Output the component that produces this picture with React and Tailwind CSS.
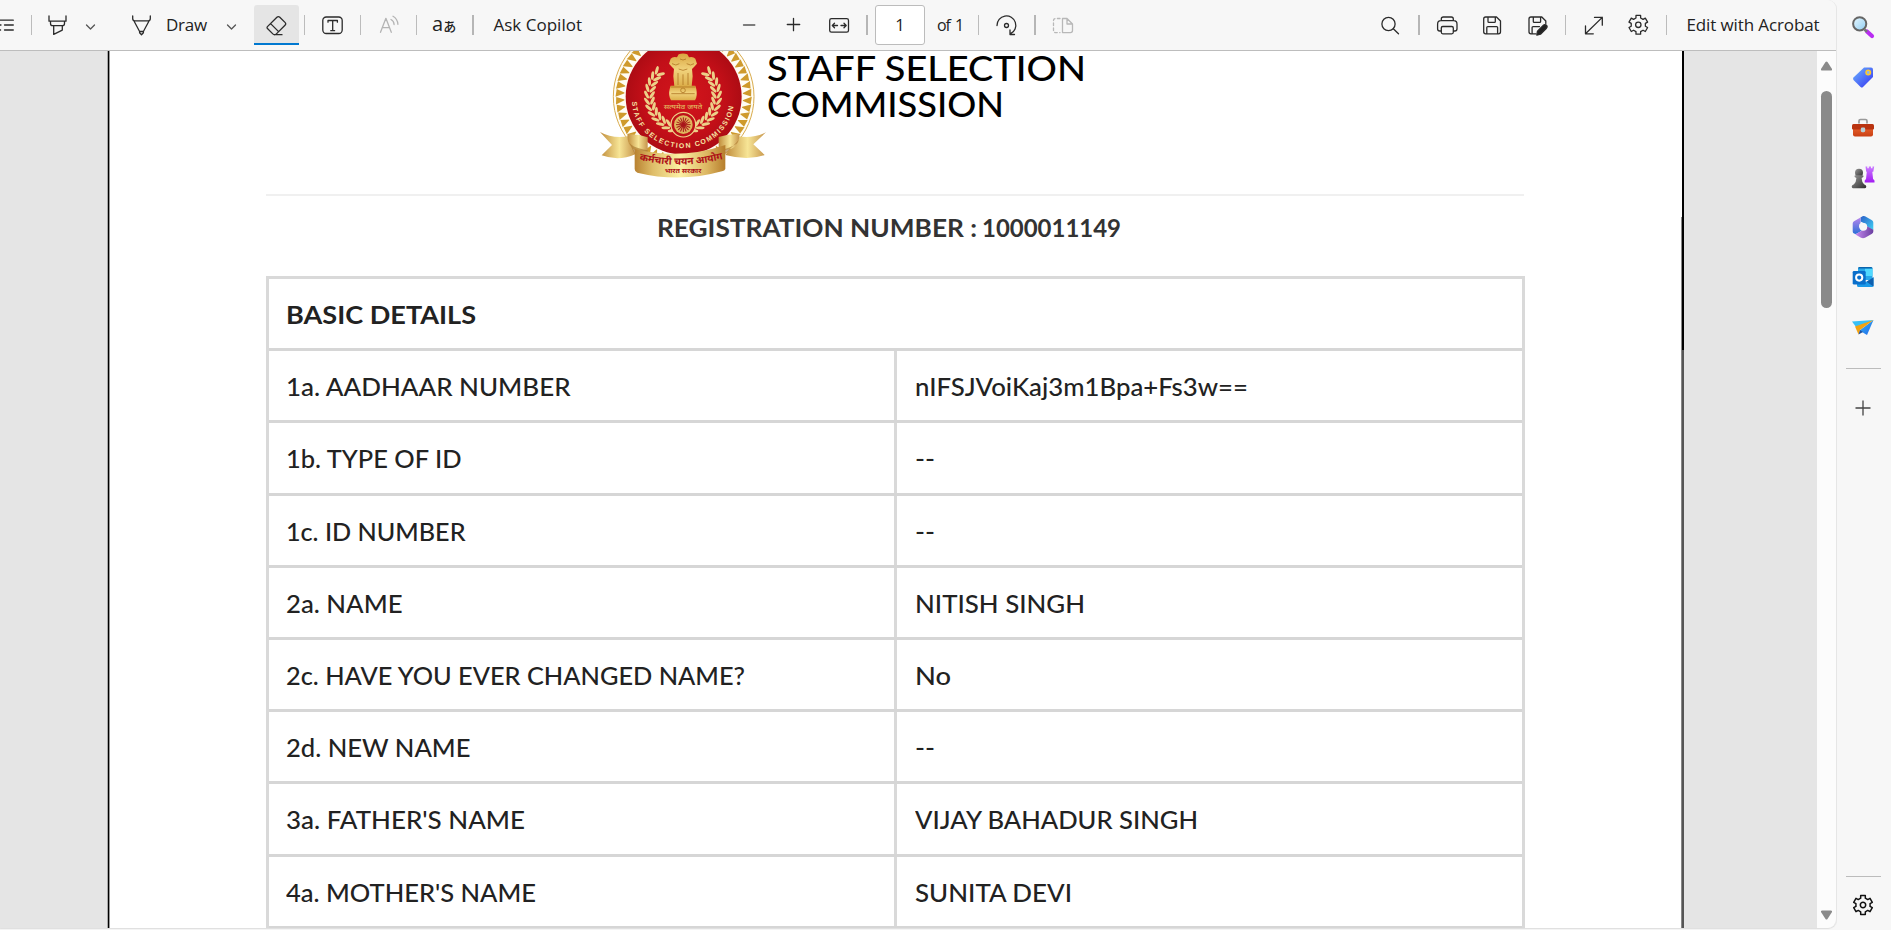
import { useLayoutEffect, useRef } from "react";

/* Spreads a line of text over a given width by adjusting its tracking. */
function Line({ w, className = "", children }) {
  const ref = useRef(null);
  useLayoutEffect(() => {
    const el = ref.current;
    el.style.letterSpacing = "0px";
    const natural = el.getBoundingClientRect().width;
    el.style.letterSpacing = `${(w - natural) / el.textContent.length}px`;
  }, [w, children]);
  return (
    <span ref={ref} className={`inline-block shrink-0 whitespace-nowrap ${className}`}>
      {children}
    </span>
  );
}

/* Widens the letters themselves so that the line fills a given width. */
function Wide({ w, className = "", children }) {
  const ref = useRef(null);
  useLayoutEffect(() => {
    const el = ref.current;
    el.style.transform = "none";
    const natural = el.getBoundingClientRect().width;
    el.style.transform = `scaleX(${w / natural})`;
  }, [w, children]);
  return (
    <span ref={ref} className={`inline-block shrink-0 origin-left whitespace-nowrap ${className}`}>
      {children}
    </span>
  );
}

/* Toolbar glyph: drawn on the toolbar's own grid, x to x + w across, 12 to 38 down. */
function Glyph({ x, w, className = "", children }) {
  return (
    <svg
      width={w}
      height="26"
      viewBox={`${x} 12 ${w} 26`}
      fill="none"
      stroke="#2b2b2b"
      strokeWidth="1.3"
      strokeLinecap="round"
      strokeLinejoin="round"
      className={`shrink-0 ${className}`}
    >
      {children}
    </svg>
  );
}

function Sep({ className = "" }) {
  return <div className={`h-5 w-px shrink-0 bg-[#bcbcbc] ${className}`} />;
}

const gearPath = (() => {
  const pts = [];
  for (let i = 0; i < 6; i++) {
    const a = (i * Math.PI) / 3 - Math.PI / 2;
    [[-0.33, 7.2], [-0.24, 9.7], [0.24, 9.7], [0.33, 7.2]].forEach(([d, r]) =>
      pts.push(`${(Math.cos(a + d) * r).toFixed(2)} ${(Math.sin(a + d) * r).toFixed(2)}`)
    );
  }
  return `M${pts.join("L")}Z`;
})();

function Gear({ stroke = "#2b2b2b", sw = 1.3 }) {
  return (
    <g stroke={stroke} strokeWidth={sw} fill="none" strokeLinejoin="round">
      <path d={gearPath} />
      <circle r="2.7" />
    </g>
  );
}

function Toolbar() {
  return (
    <div className="flex h-[51px] shrink-0 items-center rounded-tr-[9px] border-b border-[#bdbdbd] bg-[#f7f7f7] font-['Open_Sans','Noto_Sans',sans-serif] text-[17px] text-[#222]">
      <Glyph x={0} w={16}>
        <path d="M0 20.2H13.3M4.5 25H13.3M4.5 30H13.3M0 25H1M0 30H.6" />
      </Glyph>
      <Sep className="ml-[15px]" />
      <Glyph x={46} w={24} className="ml-[14px]">
        <path d="M49 16v5.2h17V16M50.5 21.2v2.2c0 1.3.9 2.2 2.2 2.2h9.6c1.3 0 2.2-.9 2.2-2.2v-2.2M53.7 25.8v8.6l8.6-4.3v-4.3" />
      </Glyph>
      <Glyph x={84} w={14} className="ml-[14px]">
        <path d="M86.5 25l4 4 4-4" stroke="#555" />
      </Glyph>
      <Glyph x={130} w={24} className="ml-[32px]">
        <path d="M132.7 16v2.600c0 1.400.8 2.300 2 2.300h13.600c1.200 0 2-.9 2-2.300V16M134 21l5.600 10.500h3.800L149 21M139.600 31.500v1.200l1.900 2 1.900-2v-1.200" />
      </Glyph>
      <Line w={41} className="ml-[12px]">Draw</Line>
      <Glyph x={225} w={14} className="ml-[18px]">
        <path d="M227.5 25l4 4 4-4" stroke="#555" />
      </Glyph>
      <div className="ml-[15px] flex h-10 w-[45px] shrink-0 items-center justify-center rounded-t-[3px] border-b-2 border-[#0078d0] bg-[#e5e5e5] pt-[2px]">
        <Glyph x={264} w={26}>
          <path d="M267.7 26.4l9.2-9.2c.9-.9 2-.9 2.900 0l5.200 5.200c.9.9.9 2 0 2.900l-8.600 8.600c-1 1-2.600 1-3.600 0l-5.100-5.100c-.9-.8-.9-1.500 0-2.400zM270.600 23.600l8 8M274.500 34.700H282" />
        </Glyph>
      </div>
      <Sep className="ml-[5px]" />
      <Glyph x={320} w={26} className="ml-[15px]">
        <rect x="322.8" y="17" width="19.4" height="16.5" rx="3.5" />
        <path d="M328 22.2v-1.700h9.400v1.700M332.700 20.500v10.200M330.800 30.700h3.800" />
      </Glyph>
      <Sep className="ml-[14px]" />
      <Glyph x={377} w={24} className="ml-[16px]">
        <g stroke="#b4b4b4">
          <path d="M380.5 32.300l5.400-14 5.400 14M382.300 27.700h7.200M391 19.500c1.900.9 3 2.600 3.100 5M393 16.300c2.900 1.600 4.600 4.300 4.900 8" />
        </g>
      </Glyph>
      <Sep className="ml-[15px]" />
      <div className="ml-[15px] flex w-[26px] shrink-0 items-baseline">
        <span className="text-[20px] leading-6 text-[#222]">a</span>
        <span className="font-['Noto_Sans_CJK_JP',sans-serif] text-[13px] leading-6 font-medium text-[#222]">あ</span>
      </div>
      <div className="ml-[14px] h-5 w-[2px] shrink-0 bg-[#b6b6b6]" />
      <Line w={88.5} className="ml-[19.5px]">Ask Copilot</Line>

      <Glyph x={741} w={16} className="ml-[159px]">
        <path d="M743.5 25h11.300" stroke="#555" />
      </Glyph>
      <Glyph x={785} w={18} className="ml-[28px]">
        <path d="M787.300 24.500h12.400M793.500 18.300v12.400" />
      </Glyph>
      <Glyph x={827} w={24} className="ml-[24px]">
        <rect x="829.7" y="18.600" width="18.800" height="13.600" rx="1.8" />
        <path d="M837.500 25.500h-5m2-2.200l-2.200 2.200 2.200 2.200M841 25.500h5m-2-2.200l2.200 2.200-2.200 2.200" />
      </Glyph>
      <div className="ml-[15px] h-5 w-[2px] shrink-0 bg-[#b6b6b6]" />
      <div className="ml-[7px] flex h-10 w-[50px] shrink-0 items-center justify-center rounded-[3px] border border-[#bcbcbc] bg-white text-[16.5px]">
        1
      </div>
      <Line w={26} className="ml-[12px] text-[16px] [word-spacing:2px]">of 1</Line>
      <Sep className="ml-[15px]" />
      <Glyph x={994} w={26} className="ml-[15px]">
        <path d="M997 25.500a9.400 9.400 0 1 1 13.600 8.200M1010 30v4.500h4.500" />
        <circle cx="1006.500" cy="25.500" r="2" />
      </Glyph>
      <div className="ml-[14px] h-5 w-[2px] shrink-0 bg-[#b6b6b6]" />
      <Glyph x={1051} w={24} className="ml-[15px]">
        <g stroke="#b8b8b8">
          <path d="M1062.500 18.500v14.100h8c1.200 0 2-.8 2-2v-6.600l-5.500-5.500zM1067 18.500v5.500h5.500" />
          <path d="M1060 18.500h-4.500c-1.200 0-2 .8-2 2v10.100c0 1.200.8 2 2 2h4.500" strokeDasharray="2.600 2.400" />
        </g>
      </Glyph>

      <Glyph x={1379} w={23} className="ml-[304px]">
        <circle cx="1388.500" cy="24" r="6.600" />
        <path d="M1393.300 28.800l5.200 5" />
      </Glyph>
      <div className="ml-[16px] h-5 w-[2px] shrink-0 bg-[#b6b6b6]" />
      <Glyph x={1435} w={25} className="ml-[15px]">
        <path d="M1441.300 20.500v-1.500c0-1.200.8-2 2-2h8c1.200 0 2 .8 2 2v1.500M1441 31h-1.200c-1.300 0-2.200-.9-2.200-2.200v-4.600c0-2 1.300-3.500 3.300-3.500h12.800c2 0 3.300 1.500 3.300 3.500v4.600c0 1.300-.9 2.200-2.200 2.200h-1.200" />
        <rect x="1441.300" y="26.500" width="12" height="7.300" rx="1.500" />
      </Glyph>
      <Glyph x={1481} w={23} className="ml-[21px]">
        <path d="M1483.700 19c0-1.200.8-2 2-2h10.800l4 4v10.800c0 1.200-.8 2-2 2h-12.800c-1.200 0-2-.8-2-2zM1488 17v4.500c0 .6.300.9.900.9h5.500c.6 0 .9-.3.9-.9V17M1486.800 33.700V27.500c0-.6.3-.9.9-.9h9c.6 0 .9.3.9.9v6.200" />
      </Glyph>
      <Glyph x={1526} w={24} className="ml-[22px]">
        <path d="M1536 33.800h-5c-1.200 0-2-.8-2-2V19c0-1.200.8-2 2-2h10.800l4 4v2.500M1533.300 17v4.500c0 .6.3.9.9.9h5.500c.6 0 .9-.3.9-.9V17M1532.100 33.700V27.500c0-.6.3-.9.9-.9h6.500" />
        <path d="M1537.500 31.200l5.700-5.700c1-1 2.400-1 3.200-.2s.8 2.200-.2 3.200l-5.700 5.700-3.700 1z" fill="#222" />
      </Glyph>
      <Sep className="ml-[15px]" />
      <Glyph x={1582} w={24} className="ml-[16px]">
        <path d="M1585.500 33.800l16.800-16.400M1594.500 17.400h7.800v7.800M1585.500 26v7.800h7.800" />
      </Glyph>
      <Glyph x={1626} w={25} className="ml-[20px]">
        <g transform="translate(1638.300 24.800)">
          <Gear />
        </g>
      </Glyph>
      <Sep className="ml-[15px]" />
      <Line w={133} className="ml-[19.5px]">Edit with Acrobat</Line>
    </div>
  );
}

const teeth = Array.from({ length: 54 }, (_, i) => (i * 360) / 54);
const leaves = Array.from({ length: 12 }, (_, i) => 44 + i * 10.6);

function Emblem() {
  return (
    <svg width="167" height="127" viewBox="0 18 501 381" className="shrink-0">
      <defs>
        <linearGradient id="band" x1="0" x2="1">
          <stop offset="0" stopColor="#b98231" />
          <stop offset="0.2" stopColor="#dfbd69" />
          <stop offset="0.5" stopColor="#fbf0a4" />
          <stop offset="0.8" stopColor="#dcb661" />
          <stop offset="1" stopColor="#b67d2c" />
        </linearGradient>
        <linearGradient id="tail" x1="0" x2="1">
          <stop offset="0" stopColor="#c08c3b" />
          <stop offset="0.55" stopColor="#f7e596" />
          <stop offset="1" stopColor="#c6944a" />
        </linearGradient>
        <radialGradient id="disc">
          <stop offset="0" stopColor="#d3151c" />
          <stop offset="0.7" stopColor="#c20f18" />
          <stop offset="1" stopColor="#ad0c14" />
        </radialGradient>
        <linearGradient id="capital" x1="0" x2="0" y1="0" y2="1">
          <stop offset="0" stopColor="#d9a53f" />
          <stop offset="0.5" stopColor="#f1d37c" />
          <stop offset="1" stopColor="#dcae4a" />
        </linearGradient>
        <path id="motto" d="M96 166A153 143 0 0 0 402 166" />
      </defs>
      <circle cx="251" cy="155" r="211" fill="#fffdf5" stroke="#d9ab4c" strokeWidth="3" />
      {teeth.map((a) => (
        <path key={a} transform={`rotate(${a} 251 155)`} d="M239 -49L262 -47L252 -20Z" fill="#cf9a2c" />
      ))}
      <circle cx="251" cy="155" r="178" fill="#fffaf0" />
      <circle cx="251" cy="155" r="174" fill="url(#disc)" />
      {[1, -1].map((s) => (
        <g key={s} transform={`translate(249 152) scale(${s} 1)`} fill="#ecd088">
          {leaves.map((a) => (
            <g key={a} transform={`rotate(${a}) translate(0 -101)`}>
              <ellipse cx="-1" cy="-9" rx="13" ry="4.600" transform="rotate(30)" />
              <ellipse cx="-1" cy="9" rx="13" ry="4.600" transform="rotate(-30)" />
            </g>
          ))}
        </g>
      ))}
      <g fill="url(#capital)">
        <path d="M236 28q13-5 26 0l5 9q12-4 19 4l5 15-9 10-6 6 2 22-3 30h-52l-3-30 2-22-6-6-9-10 5-15q7-8 19-4z" />
        <path d="M212 122h74l3 10q4 22-4 34h-72q-9-16-4-34z" />
      </g>
      <g stroke="#a96d1c" strokeWidth="3" fill="none" opacity="0.7">
        <path d="M234 84v36M264 84v36M249 88v32M213 126h72M214 146h70M240 42q9 6 18 0M216 56q12 8 22 0M260 56q12 8 22 0M236 72q13 8 26 0" />
        <circle cx="249" cy="136" r="7" />
      </g>
      <text x="249" y="192" textAnchor="middle" textLength="116" lengthAdjust="spacingAndGlyphs" fontSize="20" fill="#e3b85f" className="font-['Noto_Sans_Devanagari','Noto_Sans',sans-serif]">
        सत्यमेव जयते
      </text>
      <circle cx="250" cy="239" r="37" fill="#be1118" stroke="#f0d489" strokeWidth="3.500" />
      <circle cx="250" cy="239" r="28" fill="#dfb65d" />
      {[0, 22.5, 45, 67.5, 90, 112.5, 135, 157.5].map((a) => (
        <path key={a} transform={`rotate(${a} 250 239)`} d="M250 217V261" stroke="#a8151a" strokeWidth="3" />
      ))}
      <circle cx="250" cy="239" r="6" fill="#a8151a" />
      <text fontSize="21" fill="#f6e3a4" className="font-['Liberation_Sans',sans-serif] font-bold">
        <textPath href="#motto" textLength="442" startOffset="4">
          STAFF SELECTION COMMISSION
        </textPath>
      </text>
      <path d="M0 261Q38 282 84 274L106 328Q56 350 5 331L36 300Z" fill="url(#tail)" />
      <path d="M498 262Q458 282 414 274L376 330Q444 348 494 330L460 298Z" fill="url(#tail)" />
      <path d="M82 268Q114 266 143 277V322L104 314Q82 306 82 268Z" fill="url(#tail)" />
      <path d="M418 267Q386 266 356 276V322L378 314Q418 312 418 267Z" fill="url(#tail)" />
      <path d="M84 286Q90 308 143 316V332L104 326ZM416 286Q410 306 356 316V332L376 326Z" fill="#a36f26" opacity="0.6" />
      <path d="M104 312Q240 346 376 300V372Q374 378 366 379Q240 414 112 383Q104 380 104 372Z" fill="url(#band)" />
      <path id="hindi" d="M118 345Q245 376 376 340" fill="none" />
      <text fontSize="30" fill="#ae1017" className="font-['Noto_Sans_Devanagari','Noto_Sans',sans-serif] font-bold">
        <textPath href="#hindi" textLength="254" lengthAdjust="spacingAndGlyphs">
          कर्मचारी चयन आयोग
        </textPath>
      </text>
      <text x="249" y="385" textAnchor="middle" textLength="110" lengthAdjust="spacingAndGlyphs" fontSize="18" fill="#ae1017" className="font-['Noto_Sans_Devanagari','Noto_Sans',sans-serif] font-bold">
        भारत सरकार
      </text>
    </svg>
  );
}

const rows = [
  ["1a. AADHAAR NUMBER", 284.5, "nIFSJVoiKaj3m1Bpa+Fs3w==", 333],
  ["1b. TYPE OF ID", 175.5, "--", 20],
  ["1c. ID NUMBER", 179.5, "--", 20],
  ["2a. NAME", 116.5, "NITISH SINGH", 170],
  ["2c. HAVE YOU EVER CHANGED NAME?", 459, "No", 36],
  ["2d. NEW NAME", 184.5, "--", 20],
  ["3a. FATHER'S NAME", 239, "VIJAY BAHADUR SINGH", 283],
  ["4a. MOTHER'S NAME", 250, "SUNITA DEVI", 157],
];

function Document() {
  return (
    <div className="flex min-h-0 flex-1 overflow-hidden bg-[#e5e5e5]">
      <div className="w-[107px] shrink-0" />
      <div className="w-px shrink-0 bg-[#a8a8a8]" />
      <div className="w-px shrink-0 bg-black" />
      <div className="w-px shrink-0 bg-[#999]" />
      <div className="w-[1571px] shrink-0 overflow-hidden bg-white pl-[156px] font-[Lato,'Noto_Sans',sans-serif] text-[24.800px] leading-[30px] font-medium text-[#222]">
        <div className="flex h-[143px] w-[1258px] items-start pl-[334px]">
          <Emblem />
          <div className="-mt-px flex flex-col items-start text-[35.500px] leading-[35.500px] text-black">
            <Wide w={319}>STAFF SELECTION</Wide>
            <Wide w={237}>COMMISSION</Wide>
          </div>
        </div>
        <div className="h-[2px] w-[1258px] bg-[#f0f0f0]" />
        <div className="mt-[17px] grid h-[63px] w-[1258px] grid-cols-[325px_140px] pl-[391px] font-bold text-[#333]">
          <Wide w={320} className="justify-self-start">REGISTRATION NUMBER :</Wide>
          <Wide w={139} className="justify-self-start">1000011149</Wide>
        </div>
        <div className="w-[1259px] border-x-[3px] border-[#d9d9d9]">
          <div className="flex h-[72.200px] items-center border-t-[3px] border-[#d9d9d9] pt-[3px] pl-[17px] font-bold">
            <Wide w={190}>BASIC DETAILS</Wide>
          </div>
          {rows.map(([label, lw, value, vw]) => (
            <div key={label} className="flex h-[72.200px] border-t-[3px] border-[#d6d6d6]">
              <div className="flex w-[628px] shrink-0 items-center border-r-[3px] border-[#d9d9d9] pt-[3px] pl-[17px]">
                <Wide w={lw}>{label}</Wide>
              </div>
              <div className="flex flex-1 items-center pt-[3px] pl-[17.5px]">
                <Wide w={vw}>{value}</Wide>
              </div>
            </div>
          ))}
          <div className="h-[3px] bg-[#d6d6d6]" />
        </div>
      </div>
      <div className="flex shrink-0 flex-col">
        <div className="h-[166px] w-px bg-white" />
        <div className="w-px flex-1 bg-[#888]" />
      </div>
      <div className="flex shrink-0 flex-col">
        <div className="h-[299px] w-[2px] bg-black" />
        <div className="w-[2px] flex-1 bg-[#555]" />
      </div>
      <div className="flex-1" />
      <div className="flex w-[19px] shrink-0 flex-col items-center bg-[#fcfcfc] pt-[10px] pb-[8px]">
        <svg width="13" height="10" viewBox="0 0 13 10">
          <path d="M5.500 1Q6.500 0 7.500 1L12 8Q12.500 9.500 11 9.500H2Q.5 9.500 1 8Z" fill="#8a8a8a" />
        </svg>
        <div className="mt-[20px] h-[217px] w-[11px] rounded-full bg-[#8a8a8a]" />
        <div className="flex-1" />
        <svg width="13" height="10" viewBox="0 0 13 10">
          <path d="M5.500 9Q6.500 10 7.500 9L12 2Q12.500 .5 11 .5H2Q.5 .5 1 2Z" fill="#8a8a8a" />
        </svg>
      </div>
    </div>
  );
}

function AppIcon({ children }) {
  return (
    <div className="flex h-[50px] w-full shrink-0 items-center justify-center">
      <svg width="24" height="24" viewBox="-12 -12 24 24">
        {children}
      </svg>
    </div>
  );
}

function Sidebar() {
  return (
    <div className="flex w-[54px] shrink-0 flex-col items-center bg-[#f7f7f7] pt-[2px] pr-[2px]">
      <svg width="0" height="0" className="absolute">
        <defs>
          <linearGradient id="lens" x1="0" y1="0" x2="1" y2="1"><stop offset="0" stopColor="#e9f8ff" /><stop offset="1" stopColor="#8fcdf2" /></linearGradient>
          <linearGradient id="tag" x1="0" y1="0" x2="1" y2="1"><stop offset="0" stopColor="#6db6ff" /><stop offset="1" stopColor="#3432f0" /></linearGradient>
          <linearGradient id="box" x1="0" y1="0" x2="0" y2="1"><stop offset="0" stopColor="#e8622c" /><stop offset="1" stopColor="#c93f14" /></linearGradient>
          <linearGradient id="pawn" x1="0" y1="0" x2="1" y2="1"><stop offset="0" stopColor="#9a9a9a" /><stop offset="1" stopColor="#2c2c2c" /></linearGradient>
          <linearGradient id="rook" x1="0" y1="0" x2="0" y2="1"><stop offset="0" stopColor="#c97bff" /><stop offset="1" stopColor="#a21bf2" /></linearGradient>
          <linearGradient id="m1" x1="0" y1="0" x2="1" y2="1"><stop offset="0" stopColor="#2b5fc8" /><stop offset="1" stopColor="#3fd0f4" /></linearGradient>
          <linearGradient id="m2" x1="0" y1="0" x2="0" y2="1"><stop offset="0" stopColor="#b985ec" /><stop offset="1" stopColor="#2b6fd8" /></linearGradient>
          <linearGradient id="m3" x1="0" y1="0" x2="1" y2="0"><stop offset="0" stopColor="#c78af2" /><stop offset="1" stopColor="#6a3fa0" /></linearGradient>
          <linearGradient id="plane" x1="0" y1="0" x2="1" y2="1"><stop offset="0" stopColor="#33b6f5" /><stop offset="1" stopColor="#2166e8" /></linearGradient>
        </defs>
      </svg>
      <AppIcon>
        <path d="M4 4.500L9 9" stroke="#b92cf2" strokeWidth="4.200" strokeLinecap="round" />
        <path d="M1.500 2.500l2.500 2.300" stroke="#777" strokeWidth="2.500" />
        <circle cx="-3.300" cy="-3.200" r="6.600" fill="url(#lens)" stroke="#666" strokeWidth="2" />
      </AppIcon>
      <AppIcon>
        <path d="M1 -9.500H8Q10 -9.500 10 -7.500V0L0 10Q-1.200 11 -2.400 10L-9.500 3Q-10.500 1.800 -9.500 .6Z" fill="url(#tag)" />
        <circle cx="5.200" cy="-4.500" r="2.200" fill="#8ab4f0" stroke="#ffc928" strokeWidth="1.600" />
      </AppIcon>
      <AppIcon>
        <path d="M-4 -3.500V-6q0-1.500 1.500-1.500h5q1.500 0 1.500 1.500v2.500" fill="none" stroke="#999" strokeWidth="1.700" />
        <path d="M-10 0H10V7.500Q10 9.500 8 9.500H-8Q-10 9.500 -10 7.500Z" fill="url(#box)" />
        <path d="M-9.500 -3H9.500Q11 -3 11 -1.500V1.500Q11 2.500 10 2.500H-10Q-11 2.500 -11 1.500V-1.500Q-11 -3 -9.500 -3Z" fill="#b93310" />
        <rect x="-2.200" y=".6" width="4.400" height="4.600" rx="1.400" fill="#b9cdd4" />
      </AppIcon>
      <AppIcon>
        <path d="M2.500 -10.500h1.800v1.700h1.500v-1.700h2.200v1.700h1.500v-1.700h1.700l-.9 5.200h-1l.8 7.300 1.400 1.500v2H1.700v-2l1.300-1.500.8-7.300h-.6z" fill="url(#rook)" />
        <circle cx="-4" cy="-4.300" r="4" fill="url(#pawn)" />
        <path d="M-8.500 -.8Q-8.500 -1.800 -7.500 -1.800H-.5Q.5 -1.800 .5 -.8T-.5 .6L-1.400 1Q-1.200 5 1 7.200Q3.300 8 3.300 9.500Q3.300 11.300 2 11.300H-10Q-11.300 11.300 -11.300 9.500Q-11.300 8 -9 7.200Q-6.800 5 -6.600 1L-7.500 .6Q-8.500 .2 -8.500 -.8Z" fill="url(#pawn)" />
      </AppIcon>
      <AppIcon>
        <path d="M-2.500 -9.500L0 -11Q1 -11.300 2 -10.700L9 -6.800Q10.300 -6 10.300 -4.500V3L4 -.5L3 -3L-2.500 -5.500Z" fill="url(#m1)" />
        <path d="M-2.500 -9.500L-9 -5.800Q-10.300 -5 -10.300 -3.500V4.500Q-10.300 6 -9 6.500Q-7.500 7.300 -6 6.500L-1 3.500L-4 0Q-4.300 -3 -2.500 -4Z" fill="url(#m2)" />
        <path d="M4 -.7L10.300 2.700V4.500Q10.300 6 9 6.800L2 10.800Q0 11.600 -2 10.800L-8 7.200Q-7 7.300 -6 6.600L0 3Q4 3 4 -.7Z" fill="url(#m3)" />
        <circle cx=".3" cy="-.2" r="3.900" fill="#f7f7f7" />
      </AppIcon>
      <AppIcon>
        <path d="M-5 -8.500Q-5 -10 -3.500 -10H8Q9.500 -10 9.500 -8.500V3H-5Z" fill="#28a8ea" />
        <path d="M2 -8.500H9.500V-1H2Z" fill="#50d9ff" />
        <path d="M-5 -8.500Q-5 -10 -3.500 -10H8Q9.500 -10 9.500 -8.500Z" fill="#0a64ad" />
        <path d="M-6 1L3 5L10.500 0V8.500Q10.500 10 9 10H-4.500Q-6 10 -6 8.500Z" fill="#1c9ae8" />
        <path d="M3.500 4.800L10.500 .5V9.500Z" fill="#0f5fae" />
        <rect x="-10.300" y="-6" width="13" height="13.500" rx="1.300" fill="#0a6fcb" />
        <circle cx="-3.800" cy=".6" r="3.100" fill="none" stroke="#fff" strokeWidth="2" />
      </AppIcon>
      <AppIcon>
        <path d="M-11 -5.500L10.500 -7L-5.500 2Z" fill="#39c0f6" />
        <path d="M10.500 -7L4 8L-3.500 3.500Z" fill="url(#plane)" />
        <path d="M-8 -.5L10.500 -7L-3 3L-4.500 7.500Z" fill="#f3a310" />
        <path d="M-4.500 7.500L-3 3L0 5Z" fill="#1d4fa0" />
      </AppIcon>
      <div className="mt-[16px] h-px w-[35px] shrink-0 bg-[#bcbcbc]" />
      <svg width="16" height="16" viewBox="0 0 16 16" className="mt-[31px] shrink-0">
        <path d="M.5 8H15.500M8 .5V15.500" stroke="#444" strokeWidth="1.300" />
      </svg>
      <div className="flex-1" />
      <div className="h-px w-[35px] shrink-0 bg-[#bcbcbc]" />
      <svg width="24" height="24" viewBox="-12 -12 24 24" className="mt-[16px] mb-[13px] shrink-0">
        <Gear stroke="#111" sw={1.5} />
      </svg>
    </div>
  );
}

export default function App() {
  return (
    <div className="flex h-[930px] w-[1891px] overflow-hidden bg-[#f7f7f7]">
      <div className="flex h-[928px] w-[1837px] shrink-0 flex-col overflow-hidden rounded-r-[9px] border-r border-[#e6e6e6] shadow-[0_1px_1px_#ddd]">
        <Toolbar />
        <Document />
      </div>
      <Sidebar />
    </div>
  );
}
